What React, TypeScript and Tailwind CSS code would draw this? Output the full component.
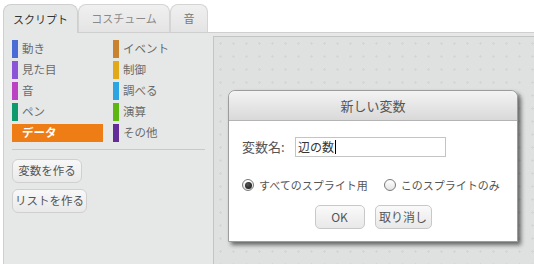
import React from "react";

const catsLeft = [
  { label: "動き", color: "bg-[#4a6cd4]" },
  { label: "見た目", color: "bg-[#8a55d7]" },
  { label: "音", color: "bg-[#bb42c3]" },
  { label: "ペン", color: "bg-[#0e9a6c]" },
];
const catsRight = [
  { label: "イベント", color: "bg-[#c88330]" },
  { label: "制御", color: "bg-[#e1a91a]" },
  { label: "調べる", color: "bg-[#2ca5e2]" },
  { label: "演算", color: "bg-[#5cb712]" },
  { label: "その他", color: "bg-[#632d99]" },
];

function Cat({ label, color }: { label: string; color: string }) {
  return (
    <div className="flex h-[18px] items-center">
      <div className={`h-[18px] w-[6px] ${color}`} />
      <span className="ml-[4px] text-[11.5px] leading-none text-[#6a6a6a]">{label}</span>
    </div>
  );
}

function Radio({ checked }: { checked: boolean }) {
  return (
    <span className="flex h-[12px] w-[12px] shrink-0 items-center justify-center rounded-full border border-[#7a7a7a] bg-[linear-gradient(#ffffff,#e4e4e4)]">
      {checked && <span className="h-[7px] w-[7px] rounded-full bg-[radial-gradient(circle_at_40%_35%,#555,#111)]" />}
    </span>
  );
}

export default function App() {
  return (
    <div className="relative h-[264px] w-[534px] overflow-hidden bg-white font-['Noto_Sans_CJK_JP',sans-serif]">
      {/* tabs */}
      <div className="flex h-[32px] items-end pl-[3px]">
        <div className="relative z-10 -mb-px flex h-[29px] w-[75px] items-center justify-center rounded-t-[8px] border border-b-0 border-[#cfcfcf] bg-[#e6e8e8] text-[11px] text-[#333]">
          スクリプト
        </div>
        <div className="flex h-[28px] w-[92px] items-center justify-center rounded-t-[8px] border border-b-0 border-[#d4d4d4] bg-[linear-gradient(#f0f0f0,#e4e4e4)] text-[11px] text-[#8a8a8a]">
          コスチューム
        </div>
        <div className="flex h-[28px] w-[38px] items-center justify-center rounded-t-[8px] border border-b-0 border-[#d4d4d4] bg-[linear-gradient(#f0f0f0,#e4e4e4)] text-[11px] text-[#777]">
          音
        </div>
      </div>
      {/* body */}
      <div className="ml-[3px] flex h-[232px] border-l border-t border-[#cfcfcf] bg-[#e6e8e8]">
        <div className="w-[209px] pl-[8px] pt-[7px]">
          <div className="flex gap-[10px]">
            <div className="flex w-[91px] flex-col gap-[3px]">
              {catsLeft.map((c) => (
                <Cat key={c.label} {...c} />
              ))}
              <div className="flex h-[18px] items-center bg-[#ee7d16] pl-[10px] text-[11.5px] font-bold leading-none text-white">
                データ
              </div>
            </div>
            <div className="flex flex-col gap-[3px]">
              {catsRight.map((c) => (
                <Cat key={c.label} {...c} />
              ))}
            </div>
          </div>
          <div className="mt-[7px] mr-[8px] h-px bg-[#c9c9c9]" />
          <div className="mt-[9px] flex flex-col items-start gap-[6px]">
            <button className="flex h-[24px] w-[70px] items-center justify-center whitespace-nowrap rounded-[6px] border border-[#d0d0d0] bg-[linear-gradient(#f8f8f8,#e9e9e9)] text-[11.5px] text-[#555]">
              変数を作る
            </button>
            <button className="flex h-[24px] w-[75px] items-center justify-center whitespace-nowrap rounded-[6px] border border-[#d0d0d0] bg-[linear-gradient(#f8f8f8,#e9e9e9)] text-[11.5px] text-[#555]">
              リストを作る
            </button>
          </div>
        </div>
        <div className="mt-[3px] flex-1 border-l border-t border-[#c4c4c4] bg-[#dfe0e0] bg-[image:radial-gradient(circle,#d4d5d5_1px,transparent_1.3px)] [background-size:13px_13px]" />
      </div>

      {/* modal dialog */}
      <div className="absolute left-[228px] top-[90px] flex h-[152px] w-[290px] flex-col rounded-t-[7px] border border-[#9c9c9c] bg-white shadow-[3px_3px_4px_rgba(0,0,0,0.55)]">
        <div className="flex h-[30px] items-center justify-center rounded-t-[7px] border-b border-[#b4b4b4] bg-[linear-gradient(#f3f3f3,#d9d9d9)] text-[13px] text-[#555]">
          新しい変数
        </div>
        <div className="flex flex-1 flex-col px-[13px] pt-[16px]">
          <div className="flex h-[20px] items-center">
            <span className="w-[53px] whitespace-nowrap text-[13px] text-[#555]">変数名:</span>
            <div className="flex h-[20px] w-[151px] items-center border border-[#c4c4c4] pl-[2px] text-[12px] text-[#333]">
              辺の数<span className="ml-px h-[14px] w-px bg-black" />
            </div>
          </div>
          <div className="mt-[20px] flex h-[16px] items-center whitespace-nowrap text-[11px] text-[#555]">
            <Radio checked />
            <span className="ml-[5px]">すべてのスプライト用</span>
            <span className="ml-[16px]"><Radio checked={false} /></span>
            <span className="ml-[5px]">このスプライトのみ</span>
          </div>
          <div className="mt-[12px] flex justify-center gap-[10px]">
            <button className="flex h-[24px] w-[50px] items-center justify-center rounded-[5px] border border-[#c8c8c8] bg-[linear-gradient(#fafafa,#e8e8e8)] text-[12px] text-[#555]">
              OK
            </button>
            <button className="flex h-[24px] w-[57px] items-center justify-center whitespace-nowrap rounded-[5px] border border-[#c8c8c8] bg-[linear-gradient(#fafafa,#e8e8e8)] text-[12px] text-[#555]">
              取り消し
            </button>
          </div>
        </div>
      </div>
    </div>
  );
}
